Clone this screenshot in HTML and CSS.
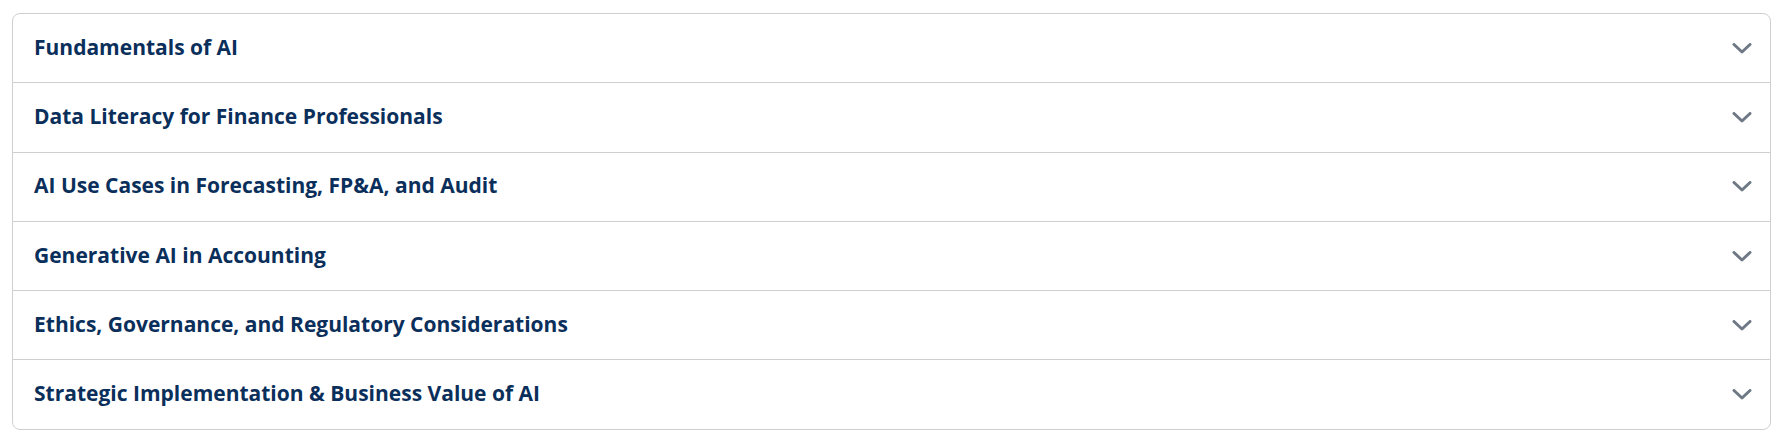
FILE: index.html
```html
<!DOCTYPE html>
<html>
<head>
<meta charset="utf-8">
<link rel="stylesheet" href="styles.css">
</head>
<body>
<div class="accordion">
  <div class="item"><span class="title">Fundamentals of AI</span><svg class="chev" viewBox="0 0 20 11"><path d="M2 1.5 L10 9 L18 1.5"/></svg></div>
  <div class="item"><span class="title">Data Literacy for Finance Professionals</span><svg class="chev" viewBox="0 0 20 11"><path d="M2 1.5 L10 9 L18 1.5"/></svg></div>
  <div class="item"><span class="title">AI Use Cases in Forecasting, FP&amp;A, and Audit</span><svg class="chev" viewBox="0 0 20 11"><path d="M2 1.5 L10 9 L18 1.5"/></svg></div>
  <div class="item"><span class="title">Generative AI in Accounting</span><svg class="chev" viewBox="0 0 20 11"><path d="M2 1.5 L10 9 L18 1.5"/></svg></div>
  <div class="item"><span class="title">Ethics, Governance, and Regulatory Considerations</span><svg class="chev" viewBox="0 0 20 11"><path d="M2 1.5 L10 9 L18 1.5"/></svg></div>
  <div class="item"><span class="title">Strategic Implementation &amp; Business Value of AI</span><svg class="chev" viewBox="0 0 20 11"><path d="M2 1.5 L10 9 L18 1.5"/></svg></div>
</div>
</body>
</html>
```
FILE: styles.css
```css
html, body { margin: 0; padding: 0; background: #fff; }
body { padding: 13px 13px 0 12px; }
.accordion {
  border: 1px solid #cfcfcf;
  border-radius: 8px;
  overflow: hidden;
}
.item {
  height: 68.3px;
  display: flex;
  align-items: center;
  justify-content: space-between;
  padding: 0 18px 0 21px;
  border-bottom: 1px solid #cfcfcf;
}
.item:last-child { border-bottom: none; }
.title {
  font-family: "Open Sans", "Noto Sans", sans-serif;
  font-weight: 700;
  font-size: 21px;
  line-height: 1;
  margin-top: -2px;
  color: #0b2f5b;
}
.chev {
  width: 20px;
  height: 11px;
  fill: none;
  stroke: #6e7985;
  stroke-width: 3;
  stroke-linecap: round;
  stroke-linejoin: round;
}
```
